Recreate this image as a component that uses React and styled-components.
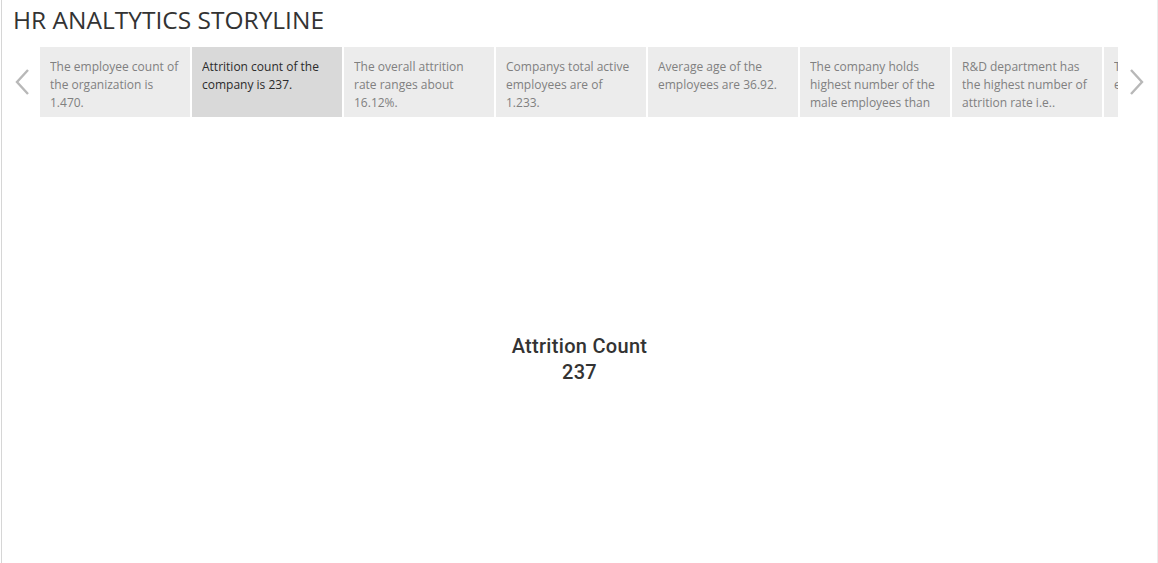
import React from 'react'
import styled, { createGlobalStyle } from 'styled-components'

const GlobalStyle = createGlobalStyle`
    html, body {
        margin: 0;
        padding: 0;
        background: #fff;
    }
    body {
        font-family: "Open Sans", "Noto Sans", sans-serif;
    }
`;

const Page = styled.div`
    height: 563px;
    box-sizing: border-box;
    margin-left: 1px;
    border-left: 1px solid #d6d6d6;
    border-right: 1px solid #ececec;
    display: flex;
    flex-direction: column;
    overflow: hidden;
`;

const Title = styled.h1`
    margin: 0;
    padding: 8px 0 0 11px;
    height: 40px;
    box-sizing: border-box;
    font-family: "Open Sans", sans-serif;
    font-weight: 400;
    font-size: 24.5px;
    line-height: 24px;
    color: #333;
`;

const Navigator = styled.div`
    display: flex;
    align-items: center;
    height: 70px;
    margin-top: 7px;
`;

const Arrow = styled.button`
    width: ${(props) => props.width};
    height: 70px;
    padding: ${(props) => props.pad || 0};
    border: none;
    background: none;
    display: flex;
    align-items: center;
    justify-content: center;
    cursor: pointer;
    flex-shrink: 0;
`;

const Track = styled.div`
    display: flex;
    gap: 2px;
    width: 1078px;
    height: 70px;
    overflow: hidden;
    flex-shrink: 0;
`;

const Point = styled.div`
    flex: 0 0 150px;
    height: 70px;
    box-sizing: border-box;
    padding: 11px 8px 0 10px;
    background: ${(props) => (props.active ? '#d9d9d9' : '#ececec')};
    color: ${(props) => (props.active ? '#2b2b2b' : '#808080')};
    font-size: 12px;
    line-height: 18px;
    overflow: hidden;
`;

const Caption = styled.div`
    max-height: 54px;
    overflow: hidden;
`;

const Stage = styled.div`
    flex: 1;
    display: flex;
    flex-direction: column;
    align-items: center;
    justify-content: center;
    padding-top: 38px;
`;

const KpiLabel = styled.div`
    font-family: Roboto, "Open Sans", sans-serif;
    font-size: 20px;
    font-weight: 500;
    line-height: 26px;
    letter-spacing: 0.3px;
    color: #333;
`;

const ChevronLeft = () => (
    <svg width="20" height="28" viewBox="0 0 20 28">
        <path d="M15 2 L4 14 L15 26" fill="none" stroke="#b8b8b8" strokeWidth="2.4" />
    </svg>
);

const ChevronRight = () => (
    <svg width="20" height="28" viewBox="0 0 20 28">
        <path d="M5 2 L16 14 L5 26" fill="none" stroke="#b8b8b8" strokeWidth="2.4" />
    </svg>
);

const points = [
    'The employee count of the organization is 1.470.',
    'Attrition count of the company is 237.',
    'The overall attrition rate ranges about 16.12%.',
    'Companys total active employees are of 1.233.',
    'Average age of the employees are 36.92.',
    'The company holds highest number of the male employees than female.',
    'R&D department has the highest number of attrition rate i.e..',
    'The employees eligible ever extended',
]

const App = () => {
    const current = 1

    return (
        <>
            <GlobalStyle />
            <Page>
                <Title>HR ANALTYTICS STORYLINE</Title>
                <Navigator>
                    <Arrow width="38px" pad="0 0 0 4px"><ChevronLeft /></Arrow>
                    <Track>
                        {points.map((text, i) => (
                            <Point key={i} active={i === current}>
                                <Caption>{text}</Caption>
                            </Point>
                        ))}
                    </Track>
                    <Arrow width="36px"><ChevronRight /></Arrow>
                </Navigator>
                <Stage>
                    <KpiLabel>Attrition Count</KpiLabel>
                    <KpiLabel>237</KpiLabel>
                </Stage>
            </Page>
        </>
    )
}

export default App
